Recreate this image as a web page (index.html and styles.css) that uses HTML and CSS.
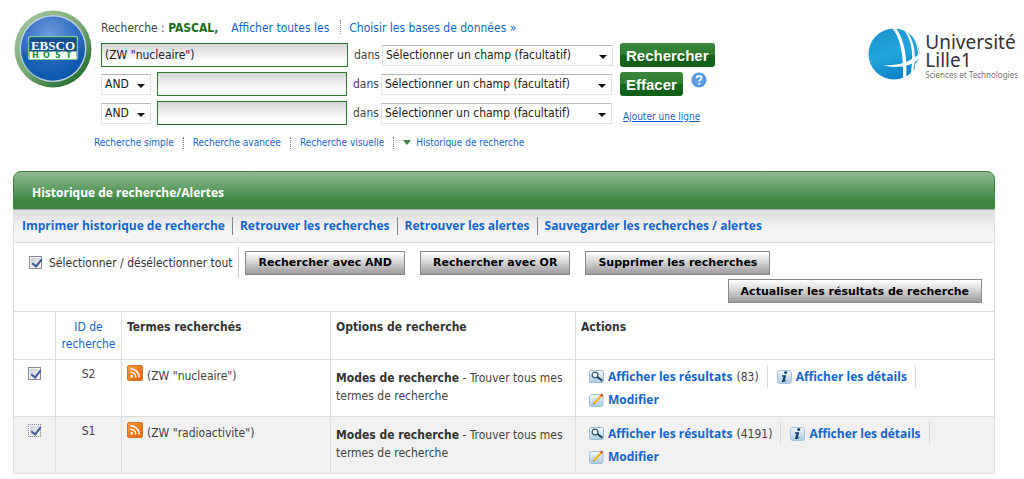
FILE: index.html
```html
<!DOCTYPE html>
<html lang="fr">
<head>
  <meta charset="UTF-8">
  <meta name="viewport" content="width=device-width, initial-scale=1.0">
  <title>EBSCOhost : Historique de recherche</title>
  <link rel="stylesheet" href="styles.css">
</head>
<body>
  <!-- shared icons -->
  <svg class="sprite" aria-hidden="true">
    <defs>
      <linearGradient id="gOrange" x1="0" y1="0" x2="1" y2="1">
        <stop offset="0" stop-color="#f2a355"/>
        <stop offset="0.5" stop-color="#ee7f1f"/>
        <stop offset="1" stop-color="#d95f0e"/>
      </linearGradient>
      <linearGradient id="gTile" x1="0" y1="0" x2="0" y2="1">
        <stop offset="0" stop-color="#f4f9fc"/>
        <stop offset="1" stop-color="#a9cbe2"/>
      </linearGradient>
    </defs>
    <symbol id="rss" viewBox="0 0 16 16">
      <rect x="0.5" y="0.5" width="15" height="15" rx="1.5" fill="url(#gOrange)" stroke="#d8762b"/>
      <circle cx="4.8" cy="11.4" r="1.3" fill="#fff"/>
      <path d="M3.6 7.2a5.2 5.2 0 0 1 5.3 5.3M3.6 3.8a8.7 8.7 0 0 1 8.7 8.7" fill="none" stroke="#fff" stroke-width="1.5"/>
    </symbol>
    <symbol id="loupe" viewBox="0 0 15 13">
      <rect x="0.5" y="0.5" width="14" height="12" rx="1.5" fill="url(#gTile)" stroke="#9dbdd3"/>
      <circle cx="6" cy="5" r="2.9" fill="#e8f3fa" stroke="#3c5a70" stroke-width="1.3"/>
      <path d="M8.3 7.1l5 3.6" stroke="#1f3a50" stroke-width="1.9"/>
    </symbol>
    <symbol id="info" viewBox="0 0 15 14">
      <rect x="0.5" y="0.5" width="14" height="13" rx="2.5" fill="url(#gTile)" stroke="#a5c5dc"/>
      <ellipse cx="8.7" cy="2.6" rx="1.6" ry="1.4" fill="#0e3c66"/>
      <path d="M5 5.2h4.3l-1.6 5.3 1.6-.5-.2 1.1-2.5 1H4.9l1.6-5.5-1.6.2z" fill="#0e3c66"/>
    </symbol>
    <symbol id="crayon" viewBox="0 0 15 14">
      <rect x="0.5" y="1.5" width="13.5" height="12" rx="2" fill="url(#gTile)" stroke="#9fc0d6"/>
      <path d="M4 11.6l.8-2.7L11.3 2l1.9 1.6-6.6 7z" fill="#f6b530"/>
      <path d="M11 2.3L12.6.4l1.9 1.5-1.6 2z" fill="#d8474a"/>
      <path d="M4 11.6l.5-1.6 1.1 1z" fill="#6d4a1d"/>
    </symbol>
  </svg>

  <header class="top">
    <svg class="logo-ebsco" viewBox="0 0 78 78" role="img" aria-label="EBSCO HOST">
      <defs>
        <linearGradient id="ring" x1="0" y1="0" x2="0.8" y2="1">
          <stop offset="0" stop-color="#a9c9a5"/>
          <stop offset="0.55" stop-color="#79a874"/>
          <stop offset="1" stop-color="#1c6827"/>
        </linearGradient>
        <radialGradient id="ball" cx="0.45" cy="0.3" r="0.75">
          <stop offset="0" stop-color="#6f9cdb"/>
          <stop offset="0.45" stop-color="#3f78c8"/>
          <stop offset="0.8" stop-color="#1a5cae"/>
          <stop offset="1" stop-color="#0b4997"/>
        </radialGradient>
      </defs>
      <circle cx="39" cy="39" r="38.5" fill="url(#ring)"/>
      <circle cx="39" cy="38.5" r="33.5" fill="#b9cfe6"/>
      <circle cx="39" cy="38.5" r="32" fill="url(#ball)"/>
      <path d="M7 42c18 7 46 6 64-4-1 19-15 32.5-32 32.5S9 60 7 42z" fill="#0d5cb0" opacity="0.55"/>
      <rect x="14" y="26" width="50" height="24" rx="3" fill="#d5ebe0"/>
      <rect x="15" y="27" width="48" height="22" rx="2" fill="#174f8e" stroke="#2d9c5b"/>
      <rect x="15.5" y="41.5" width="47" height="7.5" fill="#fff"/>
      <text x="39" y="40" class="ebsco-name" text-anchor="middle">EBSCO</text>
      <text x="18" y="48" class="ebsco-host">H</text>
      <text x="29" y="48" class="ebsco-host">O</text>
      <text x="41" y="48" class="ebsco-host">S</text>
      <text x="52" y="48" class="ebsco-host">T</text>
    </svg>

    <div class="search">
      <div class="bases">
        <span>Recherche : <strong>PASCAL,</strong></span>
        <a href="#" class="all">Afficher toutes les</a>
        <a href="#" class="choose">Choisir les bases de données »</a>
      </div>

      <form class="form">
        <div class="line">
          <input type="text" class="query wide" value='(ZW "nucleaire")' aria-label="Terme 1">
          <label for="field1">dans</label>
          <span class="pick field"><select id="field1"><option>Sélectionner un champ (facultatif)</option></select></span>
          <button type="submit" class="go">Rechercher</button>
        </div>
        <div class="line">
          <span class="pick bool"><select aria-label="Opérateur 2"><option>AND</option><option>OR</option></select></span>
          <input type="text" class="query" aria-label="Terme 2">
          <label for="field2">dans</label>
          <span class="pick field"><select id="field2"><option>Sélectionner un champ (facultatif)</option></select></span>
          <button type="reset" class="go">Effacer</button>
          <a href="#" class="help" aria-label="Aide">
            <svg width="16" height="16" viewBox="0 0 16 16">
              <circle cx="8" cy="8" r="7.3" fill="#4a90dc" stroke="#85b4e6" stroke-dasharray="2 1"/>
              <circle cx="8" cy="8" r="5.5" fill="#5d9fe3"/>
              <path d="M5.6 6.3c0-3.3 5-3.2 4.9-.3 0 1.6-2.3 1.7-2.3 3.6" fill="none" stroke="#fff" stroke-width="1.7"/>
              <circle cx="8.2" cy="11.8" r="1.1" fill="#fff"/>
            </svg>
          </a>
        </div>
        <div class="line">
          <span class="pick bool"><select aria-label="Opérateur 3"><option>AND</option><option>OR</option></select></span>
          <input type="text" class="query" aria-label="Terme 3">
          <label for="field3">dans</label>
          <span class="pick field"><select id="field3"><option>Sélectionner un champ (facultatif)</option></select></span>
          <a href="#" class="add">Ajouter une ligne</a>
        </div>
      </form>

      <nav class="modes">
        <a href="#">Recherche simple</a>
        <a href="#">Recherche avancée</a>
        <a href="#">Recherche visuelle</a>
        <a href="#" class="current">Historique de recherche</a>
      </nav>
    </div>

    <div class="lille">
      <svg width="52" height="52" viewBox="0 0 52 52" aria-hidden="true">
        <defs>
          <linearGradient id="globe" x1="0.3" y1="0" x2="0.6" y2="1">
            <stop offset="0" stop-color="#1d94cc"/>
            <stop offset="0.5" stop-color="#21a5dc"/>
            <stop offset="1" stop-color="#0a7fc6"/>
          </linearGradient>
        </defs>
        <circle cx="26" cy="26" r="25.5" fill="url(#globe)"/>
        <path d="M24 0c8 9 12 26 11 52h3C40 30 36 11 28 0z" fill="#fff"/>
        <path d="M35 1c8 9 12 25 7 48l2-1C50 28 46 12 38 2z" fill="#fff"/>
        <path d="M42 5c5 6 8 13 8 22l1-1c0-8-3-15-8-20z" fill="#fff"/>
        <path d="M14 37c14 1 28-2 38-12v5c-9 9-24 11-38 7z" fill="#fff"/>
        <path d="M47 36l5-6v16l-8 4c2-4 3-9 3-14z" fill="#fff"/>
      </svg>
      <div class="lille-text">
        <div>Université<br>Lille1</div>
        <small>Sciences et Technologies</small>
      </div>
    </div>
  </header>

  <main class="panel">
    <h1>Historique de recherche/Alertes</h1>

    <div class="links">
      <a href="#">Imprimer historique de recherche</a>
      <a href="#">Retrouver les recherches</a>
      <a href="#">Retrouver les alertes</a>
      <a href="#">Sauvegarder les recherches / alertes</a>
    </div>

    <div class="tools">
      <label class="select-all"><input type="checkbox" checked> Sélectionner / désélectionner tout</label>
      <div class="group">
        <button type="button">Rechercher avec AND</button>
        <button type="button">Rechercher avec OR</button>
        <button type="button">Supprimer les recherches</button>
      </div>
      <button type="button" class="refresh">Actualiser les résultats de recherche</button>
    </div>

    <table class="history">
      <colgroup>
        <col class="c-check"><col class="c-id"><col class="c-terms"><col class="c-options"><col>
      </colgroup>
      <thead>
        <tr>
          <th></th>
          <th class="id"><a href="#">ID de recherche</a></th>
          <th>Termes recherchés</th>
          <th>Options de recherche</th>
          <th>Actions</th>
        </tr>
      </thead>
      <tbody>
        <tr>
          <td class="check"><input type="checkbox" checked aria-label="S2"></td>
          <td class="id">S2</td>
          <td class="terms"><div><svg width="16" height="16"><use href="#rss"/></svg><span>(ZW "nucleaire")</span></div></td>
          <td class="options"><strong>Modes de recherche</strong> - Trouver tous mes termes de recherche</td>
          <td class="actions">
            <div class="acts">
              <span class="act"><svg width="15" height="13"><use href="#loupe"/></svg><a href="#">Afficher les résultats</a> <span>(83)</span></span>
              <span class="act"><svg width="15" height="14"><use href="#info"/></svg><a href="#">Afficher les détails</a></span>
            </div>
            <div class="acts">
              <span class="act last"><svg width="15" height="14"><use href="#crayon"/></svg><a href="#">Modifier</a></span>
            </div>
          </td>
        </tr>
        <tr>
          <td class="check"><input type="checkbox" class="focused" checked aria-label="S1"></td>
          <td class="id">S1</td>
          <td class="terms"><div><svg width="16" height="16"><use href="#rss"/></svg><span>(ZW "radioactivite")</span></div></td>
          <td class="options"><strong>Modes de recherche</strong> - Trouver tous mes termes de recherche</td>
          <td class="actions">
            <div class="acts">
              <span class="act"><svg width="15" height="13"><use href="#loupe"/></svg><a href="#">Afficher les résultats</a> <span>(4191)</span></span>
              <span class="act"><svg width="15" height="14"><use href="#info"/></svg><a href="#">Afficher les détails</a></span>
            </div>
            <div class="acts">
              <span class="act last"><svg width="15" height="14"><use href="#crayon"/></svg><a href="#">Modifier</a></span>
            </div>
          </td>
        </tr>
      </tbody>
    </table>
  </main>
</body>
</html>
```

FILE: styles.css
```css
* {
  box-sizing: border-box;
}

body {
  margin: 0;
  background: #fff;
  color: #444;
  font-family: "DejaVu Sans Condensed", Tahoma, sans-serif;
  font-size: 12px;
  line-height: 18px;
}

a {
  color: #1466cc;
  text-decoration: none;
}

button,
input,
select {
  font-family: inherit;
  font-size: 12px;
  margin: 0;
}

.sprite {
  position: absolute;
  width: 0;
  height: 0;
}

/* header */
.top {
  display: flex;
  align-items: flex-start;
  padding: 10px 6px 22px 14px;
}

.logo-ebsco {
  width: 78px;
  height: 78px;
  flex: none;
}

.ebsco-name {
  font: bold 13px "Liberation Serif", serif;
  fill: #fff;
}

.ebsco-host {
  font: bold 8px "DejaVu Sans", sans-serif;
  fill: #159046;
}

.search {
  flex: none;
  padding: 9px 0 0 9px;
}

.bases {
  display: flex;
  height: 18px;
}

.bases strong {
  color: #1c6d20;
}

.bases .all {
  margin-left: 13px;
  padding-right: 11px;
}

.bases .choose {
  border-left: 1px dotted #888;
  padding-left: 8px;
  height: 14px;
  line-height: 16px;
  margin-top: 1px;
}

.form {
  display: flex;
  flex-direction: column;
  gap: 5px;
  padding-top: 6px;
}

.line {
  display: flex;
  align-items: center;
  height: 24px;
}

.query {
  width: 190px;
  height: 24px;
  padding: 0 3px;
  margin-left: 6px;
  border: 1px solid #2b7a2f;
  color: #222;
  background: linear-gradient(#d4d4d4, #fff 80%);
}

.query.wide {
  width: 247px;
  margin-left: 0;
}

.line label {
  width: 28px;
  margin-left: 6px;
}

.pick {
  position: relative;
  height: 21px;
}

.pick select {
  appearance: none;
  width: 100%;
  height: 21px;
  padding: 0 3px;
  border: 1px solid #dfe2e8;
  border-top-color: #b6b8bd;
  border-radius: 1px;
  background: #fff;
  color: #222;
}

.pick::after {
  content: "";
  position: absolute;
  right: 6px;
  top: 10px;
  border: 4px solid transparent;
  border-top-color: #111;
  border-bottom: 0;
  pointer-events: none;
}

.pick.bool {
  width: 50px;
}

.pick.field {
  width: 231px;
}

.go {
  height: 24px;
  margin-left: 8px;
  padding: 0 6px;
  border: 0;
  border-radius: 3px;
  color: #fff;
  background: linear-gradient(#3b873d, #2f7c31 48%, #14641a 52%, #125f17);
  font: bold 15px "Liberation Sans", Arial, sans-serif;
}

.wide ~ .go {
  margin-left: 7px;
}

.help {
  height: 24px;
  margin-left: 8px;
}

.add {
  margin: 8px 0 0 11px;
  font-size: 10px;
  text-decoration: underline;
}

.modes {
  display: flex;
  margin: 12px 0 0 -7px;
  font-size: 10px;
  line-height: 12px;
}

.modes a + a {
  margin-left: 9px;
  padding-left: 9px;
  border-left: 1px dotted #777;
}

.modes .current::before {
  content: "";
  display: inline-block;
  margin-right: 5px;
  border: 4px solid transparent;
  border-top: 5px solid #3d8043;
  border-bottom: 0;
  vertical-align: 1px;
}

.lille {
  display: flex;
  gap: 5px;
  margin: 18px 0 0 auto;
}

.lille-text {
  display: flex;
  flex-direction: column;
  padding-top: 5px;
  color: #333;
  font-family: "Noto Sans", sans-serif;
  font-size: 19px;
  line-height: 18px;
}

.lille-text small {
  color: #777;
  font-size: 8px;
  line-height: 12px;
}

/* history panel */
.panel {
  margin: 0 29px 0 13px;
}

.panel h1 {
  margin: 0;
  height: 38px;
  padding: 4px 18px 0;
  border: 1px solid #3b8440;
  border-radius: 8px 8px 0 0;
  background: linear-gradient(#90ba93, #4d9152 65%, #3e853f 80%, #3e853f);
  color: #fff;
  font-family: "Open Sans", sans-serif;
  font-size: 12px;
  line-height: 34px;
}

.links {
  display: flex;
  align-items: center;
  height: 34px;
  padding: 0 8px;
  border: 1px solid #ddd;
  border-top-color: #aaa;
  background: linear-gradient(#dcdcdc, #f4f4f4 60%);
  font-family: "Open Sans", sans-serif;
  font-weight: bold;
}

.links a + a {
  margin-left: 7px;
  padding-left: 7px;
  border-left: 1px solid #888;
}

.tools {
  display: flex;
  flex-wrap: wrap;
  align-items: center;
  padding: 4px 12px 6px 15px;
  border: solid #ddd;
  border-width: 0 1px;
}

.select-all {
  display: flex;
  align-items: center;
  gap: 7px;
  height: 31px;
  padding-right: 6px;
  border-right: 1px solid #ccc;
  color: #333;
}

.group {
  display: flex;
  gap: 15px;
  margin-left: 6px;
}

.tools button {
  height: 24px;
  padding: 0 12px;
  border: 1px solid #888;
  background: linear-gradient(#fff, #e0e0e0 35%, #9c9a9c);
  color: #000;
  font: bold 11px "DejaVu Sans", Verdana, sans-serif;
}

.tools .refresh {
  margin: 1px 0 2px auto;
}

input[type="checkbox"] {
  appearance: none;
  flex: none;
  width: 13px;
  height: 13px;
  border: 1px solid #8a8c8e;
  background: linear-gradient(135deg, #c8ccd4, #f6f6f6);
  box-shadow: inset 0 0 0 1px #f4f4f4;
}

input[type="checkbox"]::after {
  content: "";
  display: block;
  width: 4px;
  height: 8px;
  margin: 0 0 0 4px;
  border: solid #3f569c;
  border-width: 0 2px 2px 0;
  transform: rotate(38deg);
}

input.focused {
  border-style: dotted;
}

.history {
  width: 100%;
  table-layout: fixed;
  border-collapse: collapse;
}

.c-check {
  width: 42px;
}

.c-id {
  width: 66px;
}

.c-terms {
  width: 209px;
}

.c-options {
  width: 245px;
}

.history th,
.history td {
  border: 1px solid #ddd;
  padding: 7px 5px 0;
  text-align: left;
  vertical-align: top;
}

.history th {
  height: 48px;
  line-height: 17px;
  color: #333;
}

.history th.id {
  font-weight: normal;
}

.history .id,
.history .check {
  text-align: center;
}

.history td {
  height: 57px;
}

.history td.id {
  padding-top: 5px;
}

.history tbody tr:nth-child(2) {
  background: #f1f1f1;
}

.terms div {
  display: flex;
  gap: 4px;
}

.terms svg {
  margin-top: -2px;
}

.history .options {
  padding-top: 9px;
}

.options strong {
  color: #333;
}

.history .actions {
  padding: 5px 5px 0 13px;
}

.acts {
  display: flex;
  height: 23px;
}

.act {
  display: flex;
  align-items: center;
  gap: 4px;
  margin-right: 9px;
  padding-right: 8px;
  border-right: 1px solid #d5dce4;
}

.act.last {
  border: 0;
}

.act a {
  font-family: "Open Sans", sans-serif;
  font-weight: bold;
}
```
